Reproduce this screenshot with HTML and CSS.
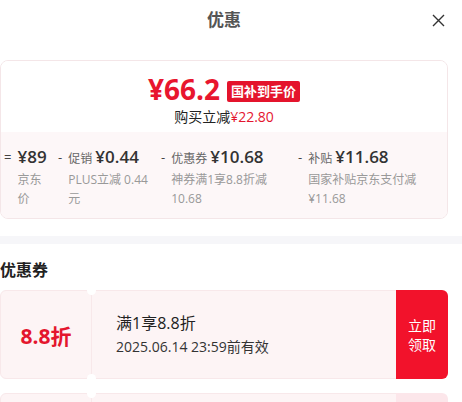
FILE: index.html
```html
<!DOCTYPE html>
<html lang="zh-CN">
<head>
  <meta charset="UTF-8">
  <meta name="viewport" content="width=device-width, initial-scale=1.0">
  <title>优惠</title>
  <link rel="stylesheet" href="styles.css">
</head>
<body>
  <div class="sheet">
    <header class="top-bar">
      <h1>优惠</h1>
      <button class="close" aria-label="关闭">
        <svg width="13" height="13" viewBox="0 0 13 13"><path d="M1 1L12 12M12 1L1 12" stroke="#333" stroke-width="1.4" fill="none"/></svg>
      </button>
    </header>

    <section class="price-card">
      <div class="price-main">
        <div class="price-line">
          <span class="final-price">¥66.2</span>
          <span class="badge">国补到手价</span>
        </div>
        <p class="save">购买立减<em>¥22.80</em></p>
      </div>
      <div class="price-detail">
        <div class="detail-item">
          <span class="op">=</span>
          <div class="detail-text">
            <div class="detail-head"><b>¥89</b></div>
            <p>京东价</p>
          </div>
        </div>
        <div class="detail-item">
          <span class="op">-</span>
          <div class="detail-text">
            <div class="detail-head">促销 <b>¥0.44</b></div>
            <p>PLUS立减 0.44元</p>
          </div>
        </div>
        <div class="detail-item">
          <span class="op">-</span>
          <div class="detail-text">
            <div class="detail-head">优惠券 <b>¥10.68</b></div>
            <p>神券满1享8.8折减 10.68</p>
          </div>
        </div>
        <div class="detail-item">
          <span class="op">-</span>
          <div class="detail-text">
            <div class="detail-head">补贴 <b>¥11.68</b></div>
            <p>国家补贴京东支付减 ¥11.68</p>
          </div>
        </div>
      </div>
    </section>

    <div class="divider"></div>

    <section class="coupons">
      <h2>优惠券</h2>
      <div class="coupon">
        <div class="coupon-value">8.8折</div>
        <div class="coupon-body">
          <p class="coupon-title">满1享8.8折</p>
          <p class="coupon-date">2025.06.14 23:59前有效</p>
        </div>
        <button class="coupon-btn">立即<br>领取</button>
      </div>
      <!-- next coupon, only its top edge shows -->
      <div class="coupon">
        <div class="coupon-value"></div>
        <div class="coupon-body"></div>
        <div class="coupon-btn soft"></div>
      </div>
    </section>
  </div>
</body>
</html>
```

FILE: styles.css
```css
body {
  margin: 0;
  padding: 0;
  background: #fff;
  font-family: "Open Sans", "Noto Sans CJK SC", sans-serif;
  color: #333;
  overflow: hidden;
}

.sheet {
  width: 462px;
}

.top-bar {
  display: grid;
  grid-template-columns: 1fr auto 1fr;
  align-items: center;
  height: 40px;
  width: 448px;
}

.top-bar h1 {
  grid-column: 2;
  margin: 0;
  font-size: 17px;
  font-weight: 700;
  color: #555;
  line-height: 40px;
}

.close {
  grid-column: 3;
  justify-self: end;
  margin-right: 3px;
  padding: 0;
  border: none;
  background: none;
  width: 13px;
  height: 13px;
  display: flex;
}

/* price card */
.price-card {
  width: 446px;
  margin-top: 20px;
  border: 1px solid #f4e6e8;
  border-radius: 8px;
  overflow: hidden;
}

.price-main {
  background: #fff;
  padding: 10px 0 5px;
  text-align: center;
}

.price-line {
  display: flex;
  justify-content: center;
  align-items: center;
  gap: 7px;
  height: 36px;
}

.final-price {
  font-size: 28px;
  font-weight: 700;
  color: #e8162e;
  line-height: 36px;
}

.badge {
  margin-top: 5px;
  height: 21px;
  line-height: 21px;
  padding: 0 4px;
  background: #e4142c;
  color: #fff;
  font-size: 13px;
  font-weight: 700;
  border-radius: 2px;
}

.save {
  margin: 0;
  font-size: 14px;
  line-height: 20px;
  color: #222;
}

.save em {
  font-style: normal;
  color: #e4162e;
}

.price-detail {
  display: grid;
  grid-template-columns: 44px 93px 127px 1fr;
  column-gap: 10px;
  padding: 14px 0 10px 3px;
  background: #fdf7f8;
}

.detail-item {
  display: flex;
  gap: 6px;
}

.op {
  font-size: 13px;
  line-height: 22px;
  color: #444;
}

.detail-text {
  flex: 1;
  min-width: 0;
}

.detail-head {
  font-size: 12px;
  line-height: 22px;
  color: #666;
  white-space: nowrap;
}

.detail-head b {
  font-size: 17px;
  font-weight: 600;
  color: #333;
}

.detail-text p {
  margin: 0;
  font-size: 12px;
  line-height: 19px;
  color: #999;
}

.divider {
  height: 8px;
  margin-top: 17px;
  background: #f6f6f9;
}

/* coupons */
.coupons {
  width: 448px;
}

.coupons h2 {
  margin: 15px 0 9px;
  font-size: 16px;
  font-weight: 700;
  line-height: 22px;
  color: #222;
}

.coupon {
  display: flex;
  height: 89px;
  margin-bottom: 14px;
}

.coupon-value {
  position: relative;
  width: 90px;
  display: flex;
  align-items: center;
  justify-content: center;
  background: #fdf4f5;
  border: 1px solid #f8e8ea;
  border-radius: 6px;
  font-size: 21px;
  font-weight: 700;
  color: #e4162e;
}

.coupon-value::before,
.coupon-value::after {
  content: "";
  position: absolute;
  right: -5px;
  width: 9px;
  height: 9px;
  border-radius: 50%;
  background: #fff;
}

.coupon-value::before {
  top: -5px;
}

.coupon-value::after {
  bottom: -5px;
}

.coupon-body {
  flex: 1;
  display: flex;
  flex-direction: column;
  justify-content: center;
  padding-left: 24px;
  background: #fdf4f5;
  border: 1px solid #f8e8ea;
  border-left: none;
  border-right: none;
}

.coupon-body p {
  margin: 0;
}

.coupon-title {
  font-size: 16px;
  line-height: 23px;
  color: #222;
}

.coupon-date {
  font-size: 14px;
  line-height: 23px;
  color: #333;
}

.coupon-btn {
  width: 52px;
  border: none;
  padding: 0;
  background: #f2122b;
  color: #fff;
  font-family: inherit;
  font-size: 14px;
  line-height: 19px;
  border-radius: 0 6px 6px 0;
}

.coupon-btn.soft {
  background: #fce6ea;
}
```
